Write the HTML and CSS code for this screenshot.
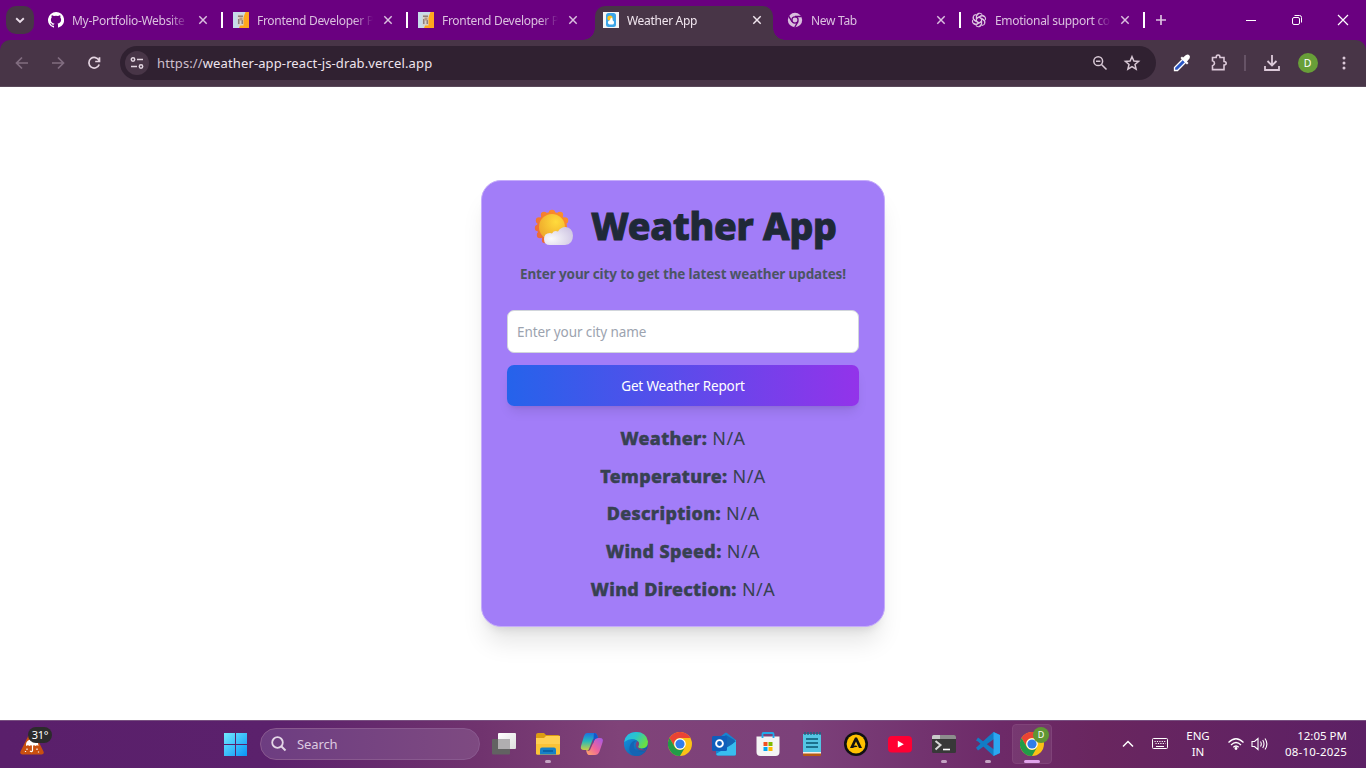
FILE: index.html
```html
<!DOCTYPE html>
<html lang="en">
<head>
<meta charset="utf-8">
<title>Weather App</title>
<link rel="stylesheet" href="styles.css">
</head>
<body>
<svg class="defs" width="0" height="0" aria-hidden="true">
  <symbol id="close" viewBox="0 0 10 10"><path d="M1.300 1.300l7.400 7.400M8.700 1.300L1.300 8.700" fill="none" stroke="currentColor" stroke-width="1.450"/></symbol>
  <symbol id="resume" viewBox="0 0 16 16"><path fill="#c7dcea" d="M0 0h16v16H0z"/><path fill="#ffa71d" d="M12.500 0H16v16H6z"/><path fill="#d9d2c8" d="M4.500 2.500h6v11h-6z"/><path fill="#8d7f7c" d="M5 3.500h5v1.500H5zM5 7h1.500v5H5zM8.500 8H10v4H8.500z"/><path fill="#b79a84" d="M6.500 5.500h3v3h-3z"/></symbol>
  <symbol id="chrome" viewBox="0 0 24 24"><circle cx="12" cy="12" r="12" fill="#fbc116"/><path fill="#ea4335" d="M1.6 6A12 12 0 0 1 22.4 6H12a6 6 0 0 0-5.2 9z"/><path fill="#229b48" d="M1.6 6A12 12 0 0 0 12 24l5.2-9A6 6 0 0 1 6.8 15z"/><circle cx="12" cy="12" r="5.8" fill="#fff"/><circle cx="12" cy="12" r="4.6" fill="#2f7de9"/></symbol>
</svg>

<header class="tabstrip">
  <button class="tab-search"><svg width="10" height="7" viewBox="0 0 10 7"><path d="M1.2 1.3L5 5l3.8-3.7" fill="none" stroke="#eadde9" stroke-width="1.9"/></svg></button>
  <div class="tab">
    <svg class="favicon" viewBox="0 0 16 16"><path fill="#fff" d="M8 0a8 8 0 0 0-2.5 15.6c.4.1.5-.2.5-.4v-1.5c-2.2.5-2.7-.9-2.7-.9-.4-.9-.9-1.2-.9-1.2-.7-.5.1-.5.1-.5.8.1 1.2.8 1.2.8.7 1.2 1.9.9 2.3.7.1-.5.3-.9.5-1.1-1.8-.2-3.6-.9-3.6-4 0-.9.3-1.6.8-2.1-.1-.2-.4-1 .1-2.1 0 0 .7-.2 2.2.8a7.600 7.600 0 0 1 4 0c1.500-1 2.200-.8 2.200-.8.400 1.100.2 1.900.1 2.100.5.6.8 1.300.8 2.100 0 3.100-1.900 3.800-3.600 4 .3.2.5.7.5 1.500v2.200c0 .2.1.5.6.4A8 8 0 0 0 8 0z"/></svg>
    <span class="tab-title">My-Portfolio-Website</span><svg class="tab-close"><use href="#close"/></svg><i class="sep"></i>
  </div>
  <div class="tab">
    <svg class="favicon"><use href="#resume"/></svg>
    <span class="tab-title">Frontend Developer P</span><svg class="tab-close"><use href="#close"/></svg><i class="sep"></i>
  </div>
  <div class="tab">
    <svg class="favicon"><use href="#resume"/></svg>
    <span class="tab-title">Frontend Developer P</span><svg class="tab-close"><use href="#close"/></svg>
  </div>
  <div class="tab active">
    <svg class="favicon" viewBox="0 0 16 16"><path fill="#f5f5f5" d="M0 0h16v16H0z"/><rect x="3" y="1" width="10" height="14" rx="2.5" fill="#3ba4e8"/><circle cx="7" cy="6" r="2.600" fill="#ffc21a"/><path fill="#fff" d="M6.500 12.500a2 2 0 0 1-1-3.400Q6.500 8 7 8.200 7.500 5.500 8.500 5.500t1.300 3q1.600.8 1.200 2.500-.3 1.500-1.500 1.500z"/></svg>
    <span class="tab-title">Weather App</span><svg class="tab-close"><use href="#close"/></svg>
  </div>
  <div class="tab narrow">
    <svg class="favicon" viewBox="0 0 16 16"><circle cx="8" cy="8" r="7.200" fill="#d9bedd"/><circle cx="8" cy="8" r="3.100" fill="#d9bedd" stroke="#6a0080" stroke-width="1.300"/><path d="M8 4.500h6.600M5 9.700L1.700 4.200M11 9.700l-3.200 5.500" stroke="#6a0080" stroke-width="1.300"/></svg>
    <span class="tab-title">New Tab</span><svg class="tab-close"><use href="#close"/></svg><i class="sep"></i>
  </div>
  <div class="tab narrow">
    <svg class="favicon" viewBox="0 0 16 16"><g fill="none" stroke="#dcc4e0" stroke-width="1.150"><path id="petal" d="M5.500 9.400V4.400a3.100 3.100 0 0 1 5.700-1.700M5.500 6.500l4.300-2.500q2-.8 3.400.6"/><use href="#petal" transform="rotate(60 8 8)"/><use href="#petal" transform="rotate(120 8 8)"/><use href="#petal" transform="rotate(180 8 8)"/><use href="#petal" transform="rotate(240 8 8)"/><use href="#petal" transform="rotate(300 8 8)"/></g></svg>
    <span class="tab-title">Emotional support co</span><svg class="tab-close"><use href="#close"/></svg><i class="sep"></i>
  </div>
  <svg class="new-tab" width="12" height="12" viewBox="0 0 12 12"><path d="M6 1v10M1 6h10" stroke="#dbc0df" stroke-width="1.700"/></svg>
  <div class="win-controls">
    <svg width="46" height="40"><path d="M18 20.500h10" stroke="#fff"/></svg>
    <svg width="46" height="40"><g fill="none" stroke="#fff"><rect x="18.500" y="17.500" width="7" height="7" rx="1.500"/><path d="M20.500 15.500h5q2 0 2 2v5"/></g></svg>
    <svg width="46" height="40"><path d="M18 15l10 10M28 15L18 25" stroke="#fff" stroke-width="1.200"/></svg>
  </div>
</header>

<div class="toolbar-back"><nav class="toolbar">
  <svg class="tool nav-off" viewBox="0 0 36 46"><path d="M28 23H17M22 17.500L16.500 23l5.500 5.500" /></svg>
  <svg class="tool nav-off" viewBox="0 0 36 46"><path d="M16 23h11M22 17.500l5.500 5.500-5.500 5.500"/></svg>
  <svg class="tool" viewBox="0 0 36 46"><path d="M27 20.500a5.300 5.300 0 1 0 .2 4M27.500 17.300v4.200h-4.300"/></svg>
  <div class="omnibox">
    <span class="site-info"><svg width="16" height="16" viewBox="0 0 16 16"><g fill="none" stroke="#e2d5e0" stroke-width="1.500"><circle cx="4" cy="4.500" r="1.700"/><path d="M8 4.500h6M2 11.500h6"/><circle cx="12" cy="11.500" r="1.700"/></g></svg></span>
    <span class="url"><span class="scheme">https://</span>weather-app-react-js-drab.vercel.app</span>
    <svg class="obi" width="32" height="34"><g fill="none" stroke="#d8c8d5" stroke-width="1.500"><circle cx="14.200" cy="15.200" r="4.400"/><path d="M17.500 18.500l5 5M12 15.200h4.400"/></g></svg>
    <svg class="obi" width="32" height="34"><path d="M16 10.700l1.900 4.300 4.700.4-3.600 3.100 1.100 4.600-4.100-2.500-4.100 2.500 1.100-4.600-3.600-3.100 4.700-.4z" fill="none" stroke="#d8c8d5" stroke-width="1.500"/></svg>
  </div>
  <svg class="ext dropper" width="35" height="46"><path d="M7.500 30.500v-3l8.500-8.500 3 3-8.500 8.500z" fill="#2955c4" stroke="#fff" stroke-width="1.300"/><path d="M13.500 18l1.500-1.500 6.500 6.500-1.500 1.500zM16 17.500l3-2.500q2-1 3.300.2t.2 3.300l-2.500 3z" fill="#fff"/></svg>
  <svg class="ext" width="37" height="46"><path d="M10.500 17.500h3.700q0-2.500 1.900-2.500t1.900 2.500h4v4q2.200.2 2.200 1.800t-2.200 1.800v4.500h-11.500v-3.800q2-.5 2-2.500t-2-2.500z" fill="none" stroke="#dcc9d9" stroke-width="1.600"/></svg>
  <i class="divider"></i>
  <svg class="ext" width="36" height="46"><path d="M18 15v10M13.500 21l4.500 4.500 4.500-4.500M11 26v4h14v-4" fill="none" stroke="#dcc9d9" stroke-width="1.800"/></svg>
  <span class="avatar">D</span>
  <svg class="ext menu" width="36" height="46"><g fill="#dcc9d9"><circle cx="18" cy="18" r="1.500"/><circle cx="18" cy="23" r="1.500"/><circle cx="18" cy="28" r="1.500"/></g></svg>
</nav></div>

<main class="page">
  <section class="card">
    <h1 class="title">
      <svg class="sun" width="40" height="38" viewBox="0 0 40 38">
        <defs><radialGradient id="sg" cx=".65" cy=".3" r=".8"><stop offset="0" stop-color="#ffdb3c"/><stop offset="1" stop-color="#eda52a"/></radialGradient><linearGradient id="rg" gradientUnits="userSpaceOnUse" x1="34" y1="2" x2="4" y2="34"><stop offset="0" stop-color="#ff9526"/><stop offset="1" stop-color="#e8643c"/></linearGradient><radialGradient id="cg" cx=".25" cy=".65" r=".8"><stop offset="0" stop-color="#fafafc"/><stop offset="1" stop-color="#d1c8e4"/></radialGradient></defs>
        <g fill="url(#rg)"><circle cx="18" cy="18" r="15"/><circle cx="18" cy="4" r="3.200"/><circle cx="26" cy="6" r="3.200"/><circle cx="31" cy="11.500" r="3.200"/><circle cx="10" cy="6" r="3.200"/><circle cx="5" cy="11.500" r="3.200"/><circle cx="4" cy="19" r="3.200"/><circle cx="6" cy="26" r="3.200"/><circle cx="11" cy="31" r="3.200"/></g>
        <circle cx="18" cy="18" r="13" fill="url(#sg)"/>
        <path d="M16 36q-6 0-6-6t6-6q1 0 2 .4 2-3.500 6-2 2.500-4.500 7.500-4.500 7 .5 7.500 8.500 0 9-8 9.600z" fill="url(#cg)"/>
      </svg>
      <span>Weather App</span>
    </h1>
    <p class="subtitle">Enter your city to get the latest weather updates!</p>
    <input class="city" type="text" placeholder="Enter your city name">
    <button class="report">Get Weather Report</button>
    <div class="results">
      <p><b>Weather:</b> N/A</p>
      <p><b>Temperature:</b> N/A</p>
      <p><b>Description:</b> N/A</p>
      <p><b>Wind Speed:</b> N/A</p>
      <p><b>Wind Direction:</b> N/A</p>
    </div>
  </section>
</main>

<footer class="taskbar">
  <div class="widget">
    <svg width="26" height="26" viewBox="0 0 26 26"><path d="M11 2.500q2-3 4 0l9.500 19q1 3-2 3h-19q-3 0-2-3z" fill="#ca5010"/><path d="M7 14q.5-4 5-4.500 5-.5 7 3.500l.5 3q-1.500-1.500-3 0-1.500-1.500-3 0-1.500-1.500-3 0-1.500-1.500-3.500 0z" fill="#fff"/><path d="M13.500 15v5.500q-.5 2-2.500.5M8 18.500v1.500M18 18.500V20M6.500 21v1M19.500 21.500v1" stroke="#fff" stroke-width="1.200" fill="none"/></svg>
    <span class="temp">31°</span>
  </div>
  <div class="apps">
    <span class="slot start"><svg width="24" height="24" viewBox="0 0 24 24"><defs><linearGradient id="wg" gradientUnits="userSpaceOnUse" x1="0" y1="0" x2="24" y2="24"><stop offset="0" stop-color="#76eeff"/><stop offset="1" stop-color="#0793f8"/></linearGradient></defs><path fill="url(#wg)" d="M1 1h11v11H1zM13 1h11v11H13zM1 13h11v11H1zM13 13h11v11H13z"/></svg></span>
    <div class="search"><svg width="18" height="18" viewBox="0 0 18 18"><circle cx="7.500" cy="7.500" r="5.300" fill="none" stroke="#e4d7e7" stroke-width="1.800"/><path d="M11.500 11.500l4 4" stroke="#e4d7e7" stroke-width="2"/></svg><span>Search</span></div>
    <span class="slot"><svg width="24" height="24" viewBox="0 0 24 24"><defs><linearGradient id="tv" x1="0" y1="0" x2="1" y2="1"><stop offset="0" stop-color="#fff"/><stop offset="1" stop-color="#dedede"/></linearGradient></defs><rect y="7" width="18" height="15.500" rx="1" fill="#626262"/><rect x="6" y="1" width="18" height="16" rx="1" fill="url(#tv)"/><path d="M6 7h12v10H6z" fill="#b0aeb0"/></svg></span>
    <span class="slot run"><svg width="24" height="24" viewBox="0 0 24 24"><path d="M0 3q0-2 2-2h6l2 2h12q2 0 2 2v6H0z" fill="#dc9c12"/><path d="M0 6h8l2-2h14v17q0 1.500-1.500 1.500h-21Q0 22.500 0 21z" fill="#ffd052"/><path d="M0 12h24v9q0 1.500-1.500 1.500h-21Q0 22.500 0 21z" fill="#fbc337"/><path d="M4 22.500v-5q0-2 2-2h12q2 0 2 2v5z" fill="#1781c6"/><path d="M7 19h10" stroke="#075b9d" stroke-width="1.500"/></svg></span>
    <span class="slot"><svg width="24" height="24" viewBox="0 0 24 24"><defs><linearGradient id="ca" x1="0" y1="0" x2="0" y2="1"><stop offset="0" stop-color="#1c73df"/><stop offset=".45" stop-color="#24b8bd"/><stop offset="1" stop-color="#d8cf39"/></linearGradient><linearGradient id="cb" x1="1" y1="0" x2="0" y2="1"><stop offset="0" stop-color="#a358e9"/><stop offset=".55" stop-color="#f06599"/><stop offset="1" stop-color="#ffad64"/></linearGradient></defs><path d="M7 1h8q2 0 3 5l-5 1-4 10q-1 3-3 1H4q-4 0-3-4L4 4q1-3 3-3z" fill="url(#ca)"/><path d="M18 6h2q4 0 2.500 4.500l-3 9Q18 23 15 23H9q-2 0-3-5 2 2 4 0l4-9q1-3 4-3z" fill="url(#cb)"/><path d="M14 1q3 0 4 5-3 0-4 3l-1 3z" fill="#1456cc"/></svg></span>
    <span class="slot"><svg width="24" height="24" viewBox="0 0 24 24"><defs><linearGradient id="ea" x1="0" y1="0" x2="1" y2=".5"><stop offset="0" stop-color="#27b5ef"/><stop offset=".5" stop-color="#2ac5ca"/><stop offset="1" stop-color="#6bdf42"/></linearGradient><linearGradient id="eb" x1="0" y1="0" x2="1" y2="1"><stop offset="0" stop-color="#119ae8"/><stop offset="1" stop-color="#134f99"/></linearGradient></defs><circle cx="12" cy="12" r="12" fill="url(#eb)"/><path d="M.2 10Q2 0 12 0q10.500 0 12 9.500 0 7-6.500 7-4.500 0-3-3 1-3-1.500-5Q7 5 .2 10z" fill="url(#ea)"/><path d="M13 8.500q-5 2-2.500 8 3.500 6 11.500 2-4 5.500-10 5.500-8-3-6.500-9Q7 8 13 8.500z" fill="#1464b4"/><path d="M13.500 9q-3 3-1 6.500 3.500 4.500 10.500 1.500l-2 1.500q-1-1-5-2-3-1-1.500-3Q16 11 13.500 9z" fill="#804379"/></svg></span>
    <span class="slot"><svg width="24" height="24"><use href="#chrome"/></svg></span>
    <span class="slot"><svg width="25" height="24" viewBox="0 0 25 24"><path d="M4 8l9-7q1-.8 2 0l9 7v14q0 1.500-1.500 1.500h-17Q4 23.500 4 22z" fill="#1685d1"/><path d="M10 5l6 4 8-1v7l-9 5-11-5z" fill="#2cc5f1"/><path d="M14 3l10 6-9 8-7-10z" fill="#1467b6"/><path d="M4 22l20-12v12q0 1.500-1.500 1.500h-17z" fill="#38bdef"/><rect y="4" width="15" height="15" rx="1.500" fill="#0f5ebb"/><circle cx="7.500" cy="11.500" r="3.400" fill="none" stroke="#fff" stroke-width="1.900"/></svg></span>
    <span class="slot"><svg width="24" height="24" viewBox="0 0 24 24"><path d="M6.500 6V2q0-1 1-1h9q1 0 1 1v4" fill="none" stroke="#21a9e9" stroke-width="1.800"/><path d="M.5 4.500h23V20q0 4-4 4h-15q-4 0-4-4z" fill="#f4f4f4"/><path d="M6.500 4v2M17.500 4v2" stroke="#21a9e9" stroke-width="1.800"/><path fill="#f25022" d="M7.500 10h4v4h-4z"/><path fill="#7fba00" d="M12.500 10h4v4h-4z"/><path fill="#00a4ef" d="M7.500 15h4v4h-4z"/><path fill="#ffb900" d="M12.500 15h4v4h-4z"/></svg></span>
    <span class="slot"><svg width="20" height="24" viewBox="0 0 20 24"><path d="M1 19h18v4q0 1-1 1H2q-1 0-1-1z" fill="#b75b13"/><path d="M1 20h18v1.500H1z" fill="#f4eee8"/><path d="M1 2h18v18H1z" fill="#54c5e4"/><path d="M3 0v3M6 0v3M9 0v3M12 0v3M15 0v3M18 0v3" stroke="#176584" stroke-width="1.400"/><path d="M4 7h12M4 11h12M4 15h12" stroke="#095571" stroke-width="1.500"/></svg></span>
    <span class="slot"><svg width="24" height="24" viewBox="0 0 24 24"><circle cx="12" cy="12" r="12" fill="#101112"/><circle cx="12" cy="12" r="9.400" fill="#ffc000"/><path d="M11 5.500h2L18 16h-3l-3-6.500-2 4.200q2.500-.7 3.500 1.300-3-.5-4.500 1H6z" fill="#101112"/></svg></span>
    <span class="slot"><svg width="24" height="24" viewBox="0 0 24 24"><rect y="4" width="24" height="16.500" rx="4" fill="#ff0033"/><path d="M9.800 8.800l6 3.400-6 3.400z" fill="#fff"/></svg></span>
    <span class="slot run"><svg width="24" height="24" viewBox="0 0 24 24"><path d="M0 5q0-2 2-2h20q2 0 2 2v14.500q0 1.500-1.500 1.500h-21Q0 21 0 19.500z" fill="#383838"/><path d="M0 7V5q0-2 2-2h20q2 0 2 2v2z" fill="#8d8d8d"/><path d="M0 7V5q0-2 2-2h6v4z" fill="#c9c9c9"/><path d="M3.500 9l5 4-5 4.500" fill="none" stroke="#d8d8d8" stroke-width="2"/><path d="M11 17.500h7" stroke="#fff" stroke-width="1.600"/></svg></span>
    <span class="slot run"><svg width="24" height="24" viewBox="0 0 24 24"><path d="M17.500 0L24 3v18l-6.500 3L2 9.500 0 8.500l2-3 16 12V7L2 18.500l-2-2.800L14 3z" fill="#127cc5"/><path d="M17.500 0L24 3v18l-6.500 3z" fill="#2ba6f0"/></svg></span>
    <span class="slot current"><svg width="24" height="24"><use href="#chrome"/></svg><span class="badge">D</span></span>
  </div>
  <div class="tray">
    <svg class="chev" width="12" height="8" viewBox="0 0 12 8"><path d="M1 6.500l5-5 5 5" fill="none" stroke="#fff" stroke-width="1.500"/></svg>
    <svg class="keyboard" width="16" height="12" viewBox="0 0 16 12"><rect x=".5" y=".5" width="15" height="10" rx="1" fill="none" stroke="#fff"/><path d="M2.500 3.500h11M3.500 5.500h10" stroke="#fff" stroke-dasharray="1.200 1.200"/><path d="M4 8.500h8" stroke="#fff"/></svg>
    <div class="lang"><span>ENG</span><span>IN</span></div>
    <svg class="wifi" width="18" height="14" viewBox="0 0 18 14"><g fill="none" stroke="#fff" stroke-width="1.200"><path d="M1.500 5.500q7.500-7.500 15 0M4 8q5-5 10 0M6.300 10.300q2.700-2.600 5.400 0"/></g><circle cx="9" cy="11.500" r="1.400" fill="#fff"/></svg>
    <svg class="volume" width="18" height="14" viewBox="0 0 18 14"><g fill="none" stroke="#fff" stroke-width="1.100"><path d="M1 4.500h2.500L7 1.500v11L3.500 9.500H1zM9.500 4.500q1.600 2.500 0 5M11.700 3q2.600 4 0 8M14 1.500q3.800 5.500 0 11"/></g></svg>
    <div class="clock"><span>12:05 PM</span><span class="date">08-10-2025</span></div>
  </div>
</footer>
</body>
</html>
```
FILE: styles.css
```css
* { box-sizing: border-box; }
body {
  margin: 0;
  width: 1366px;
  height: 768px;
  overflow: hidden;
  display: flex;
  flex-direction: column;
  background: #fff;
  font-family: "Noto Sans", "Open Sans", sans-serif;
}
svg { display: block; flex: none; }
.defs { position: absolute; }
button, input { font-family: inherit; }

/* Tab strip */
.tabstrip { display: flex; height: 40px; background: #6a0080; flex: none; }
.tab-search {
  width: 28px; height: 28px; margin: 6px 6px 0; padding: 0;
  border: 0; border-radius: 10px; background: #483547;
  display: flex; align-items: center; justify-content: center; flex: none;
}
.tab {
  position: relative; display: flex; align-items: center; flex: none;
  width: 185px; height: 40px; padding-left: 8px; color: #dbc0df;
}
.favicon { width: 16px; height: 16px; }
.tab-title {
  width: 116px; margin: 2px 0 0 8px; overflow: hidden; white-space: nowrap;
  font-size: 12px; line-height: 20px; letter-spacing: -.3px;
  mask-image: linear-gradient(90deg, #000 84%, transparent 100%);
}
.tab-close { width: 10px; height: 10px; margin-left: 10px; }
.sep { width: 2px; height: 16px; margin-left: 13px; background: #fff; }
.tab.active { width: 184px; color: #f1e6ef; }
.tab.active .tab-close { margin-left: 9px; }
.tab.narrow { width: 184px; }
.tab.narrow .tab-close { margin-left: 9px; }
.tab.active::before {
  content: ""; position: absolute; z-index: 0; left: -12px; right: -18px; top: 6px; bottom: 0;
  background:
    radial-gradient(circle at 0 0, transparent 11.500px, #483547 12px) 0 100% / 12px 12px no-repeat,
    radial-gradient(circle at 100% 0, transparent 11.500px, #483547 12px) 100% 100% / 12px 12px no-repeat;
  width: 202px; right: auto;
}
.tab.active::after {
  content: ""; position: absolute; left: 0; width: 178px; top: 6px; bottom: 0;
  border-radius: 10px 10px 0 0; background: #483547;
}
.tab.active > * { position: relative; z-index: 1; }
.new-tab { margin: 14px 0 0 8px; }
.win-controls { display: flex; margin-left: auto; }

/* Toolbar */
.toolbar-back { height: 47px; background: #6a0080; flex: none; }
.toolbar {
  height: 47px; display: flex; background: #483547;
  border-bottom: 1px solid #5a495a; border-radius: 10px 10px 0 0;
}
.tool { width: 36px; height: 46px; fill: none; stroke: #e4d4e1; stroke-width: 1.700; }
.nav-off { stroke: #816d80; }
.tool:nth-child(3) { margin-right: 12px; }
.omnibox {
  display: flex; align-items: center; width: 1036px; height: 34px; margin-top: 6px;
  padding: 0 8px 0 5px; border-radius: 17px; background: #302131;
}
.site-info {
  width: 24px; height: 24px; border-radius: 50%; background: #483547;
  display: flex; align-items: center; justify-content: center;
}
.url { margin: 0 auto 0 8px; font-size: 13px; color: #eee4ed; white-space: nowrap; letter-spacing: .12px; }
.scheme { color: #cebfcc; }
.dropper { margin-left: 11px; }
.divider { width: 1.500px; height: 16px; margin: 15px 8px 0 5px; background: #665366; }
.avatar {
  width: 20px; height: 20px; margin: 13px 8px 0; border-radius: 50%;
  background: #689f38; color: #fff; font-size: 10.500px; line-height: 20px; text-align: center; flex: none;
}

/* Page */
.page { flex: 1; display: flex; justify-content: center; align-items: flex-start; padding-top: 93px; }
.card {
  width: 404px; height: 447px; padding: 23px 25px 0; border-radius: 20px;
  border: 1px solid #c5acfb; background: #a27df8;
  box-shadow: 0 20px 25px -5px rgba(0,0,0,.1), 0 8px 10px -6px rgba(0,0,0,.1);
  display: flex; flex-direction: column; text-align: center;
}
.title {
  display: flex; align-items: center; justify-content: center; gap: 17px;
  height: 44px; margin: 0; padding-left: 5px; color: #1f2937;
  font-size: 37.500px; font-weight: 800; line-height: 44px; white-space: nowrap;
}
.title span { letter-spacing: -.2px; -webkit-text-stroke: 1px #1f2937; }
.sun { margin-top: 3px; }
.subtitle {
  margin: 15px 0 24px; height: 23px; line-height: 23px; font-size: 13.500px;
  font-weight: 700; letter-spacing: -.14px; color: #4b5563; white-space: nowrap;
}
.city {
  height: 43px; padding: 1px 9px 0; border: 1px solid #d1d5db; border-radius: 7px;
  background: #fff; font-size: 13.500px; letter-spacing: -.1px; outline: 0;
}
.city::placeholder { color: #9ca3af; opacity: 1; }
.report {
  height: 41px; margin-top: 12px; padding: 0; border: 0; border-radius: 7px;
  background: linear-gradient(90deg, #2563eb, #9333ea); color: #fff; font-size: 13.500px; letter-spacing: -.14px;
  box-shadow: 0 8px 12px -3px rgba(0,0,0,.1), 0 3px 5px -3px rgba(0,0,0,.1);
}
.results { margin-top: 14px; color: #374151; font-size: 18px; letter-spacing: .44px; }
.results p { margin: 0; height: 37.700px; line-height: 37.700px; white-space: nowrap; }
.results b { font-weight: 800; letter-spacing: .36px; -webkit-text-stroke: .5px #374151; }

/* Taskbar */
.taskbar {
  display: flex; height: 48px; flex: none; border-top: 1px solid #785080; color: #fff;
  background: linear-gradient(90deg, #5a1f6b 0, #5b216c 270px, #70336e 480px, #804379 620px, #7c417a 800px, #6d2a68 1000px, #69265f 1100px, #5c2065 1366px);
}
.widget { position: relative; width: 213px; padding: 9px 0 0 19px; }
.temp {
  position: absolute; left: 28px; top: 6px; width: 24px; height: 16px; border-radius: 8px;
  background: #2b2b2b; font-size: 11px; line-height: 16px; text-align: center; letter-spacing: -.3px;
}
.apps { display: flex; align-items: center; height: 46px; }
.slot { position: relative; width: 44px; height: 46px; display: flex; align-items: center; justify-content: center; }
.run::after {
  content: ""; position: absolute; left: 19px; bottom: 4px; width: 6px; height: 3px;
  border-radius: 2px; background: #c4a4c3;
}
.search {
  display: flex; align-items: center; gap: 9px; width: 220px; height: 32px; margin: 0 2px 0 3px;
  padding-left: 9px; border-radius: 16px; border: 1px solid #89598f;
  background: linear-gradient(90deg, #6d3d81, #7e4a81); color: #ddcae0; font-size: 13px; letter-spacing: -.1px;
}
.current::before {
  content: ""; position: absolute; inset: 3px 2px; border-radius: 4px;
  border: 1px solid #804379; background: rgba(255,255,255,.07);
}
.current > svg { position: relative; }
.current::after {
  content: ""; position: absolute; left: 14px; bottom: 4px; width: 16px; height: 3px;
  border-radius: 2px; background: #e1a3eb;
}
.badge {
  position: absolute; left: 23px; top: 6px; width: 16px; height: 16px; border-radius: 50%;
  background: #5f9634; font-size: 9px; line-height: 16px; text-align: center;
}
.tray { display: flex; align-items: center; height: 46px; margin-left: auto; font-size: 11.500px; }
.keyboard { margin-left: 18px; }
.lang { width: 30px; margin-left: 15px; display: flex; flex-direction: column; align-items: center; line-height: 16px; }
.wifi { margin-left: 14px; }
.volume { margin-left: 6px; }
.clock { width: 78px; margin: 0 19px 0 0; display: flex; flex-direction: column; align-items: flex-end; line-height: 16px; white-space: nowrap; }
.date { letter-spacing: .2px; }
```
